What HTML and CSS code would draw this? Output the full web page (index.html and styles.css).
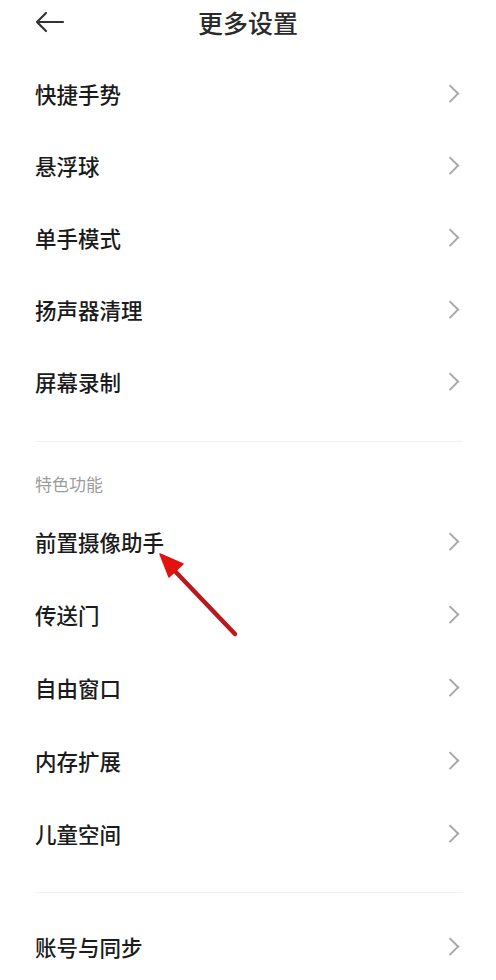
FILE: index.html
```html
<!DOCTYPE html>
<html lang="zh">
<head>
<meta charset="utf-8">
<link rel="stylesheet" href="styles.css">
</head>
<body>
<div class="page">
  <header class="topbar">
    <svg class="back" width="30" height="22" viewBox="0 0 30 22"><path d="M28 11H2M11 2L2 11l9 9" fill="none" stroke="#333" stroke-width="2.2" stroke-linecap="round" stroke-linejoin="round"/></svg>
    <h1 class="title">更多设置</h1>
  </header>
  <ul class="list first">
    <li class="row"><span>快捷手势</span><i class="chev"></i></li>
    <li class="row"><span>悬浮球</span><i class="chev"></i></li>
    <li class="row"><span>单手模式</span><i class="chev"></i></li>
    <li class="row"><span>扬声器清理</span><i class="chev"></i></li>
    <li class="row"><span>屏幕录制</span><i class="chev"></i></li>
  </ul>
  <div class="divider d1"></div>
  <div class="section-label">特色功能</div>
  <ul class="list second">
    <li class="row"><span>前置摄像助手</span><i class="chev"></i></li>
    <li class="row"><span>传送门</span><i class="chev"></i></li>
    <li class="row"><span>自由窗口</span><i class="chev"></i></li>
    <li class="row"><span>内存扩展</span><i class="chev"></i></li>
    <li class="row"><span>儿童空间</span><i class="chev"></i></li>
  </ul>
  <div class="divider d2"></div>
  <ul class="list third">
    <li class="row"><span>账号与同步</span><i class="chev"></i></li>
  </ul>
  <svg class="pointer" width="100" height="100" viewBox="150 545 100 100">
    <line x1="235" y1="634" x2="172" y2="568" stroke="#b8191c" stroke-width="4.5" stroke-linecap="round"/>
    <polygon points="160,554 183,564 169,577" fill="#e3110f" stroke="#e3110f" stroke-width="1.5" stroke-linejoin="round"/>
  </svg>
</div>
</body>
</html>
```

FILE: styles.css
```css
* { box-sizing: border-box; }
html, body { margin: 0; padding: 0; background: #fff; }
body {
  font-family: "Noto Sans CJK SC", "Noto Sans", sans-serif;
  color: #1b1b1b;
}
.page { position: relative; width: 496px; height: 980px; overflow: hidden; }
.topbar {
  height: 48px;
  position: relative;
  display: flex;
  align-items: center;
  justify-content: center;
}
.back { position: absolute; left: 35px; top: 11px; }
.title {
  margin: 0;
  font-size: 25px;
  font-weight: 500;
  color: #2a2a2a;
  line-height: 48px;
  position: relative;
  top: -2px;
}
.list { list-style: none; margin: 0; padding: 0; }
.list.first { margin-top: 12px; }
.row {
  height: 72px;
  display: flex;
  align-items: center;
  justify-content: space-between;
  padding: 0 37px 5px 35px;
  font-size: 21.5px;
  font-weight: 500;
}
.list.second .row { height: 73px; }
.chev {
  width: 12.5px; height: 12.5px;
  border-top: 2px solid #a8a8a8;
  border-right: 2px solid #a8a8a8;
  transform: rotate(45deg);
  margin-right: 3px;
}
.divider { height: 1px; background: #f0f0f0; margin: 0 33px 0 36px; }
.d1 { margin-top: 21px; }
.section-label {
  font-size: 17px;
  color: #9d9d9d;
  height: 64px;
  padding-left: 35px;
  padding-top: 30px;
  line-height: 24px;
}
.list.second { margin-top: 1px; }
.d2 { margin-top: 20px; }
.list.third { margin-top: 20px; }
.pointer { position: absolute; left: 150px; top: 545px; }
```
